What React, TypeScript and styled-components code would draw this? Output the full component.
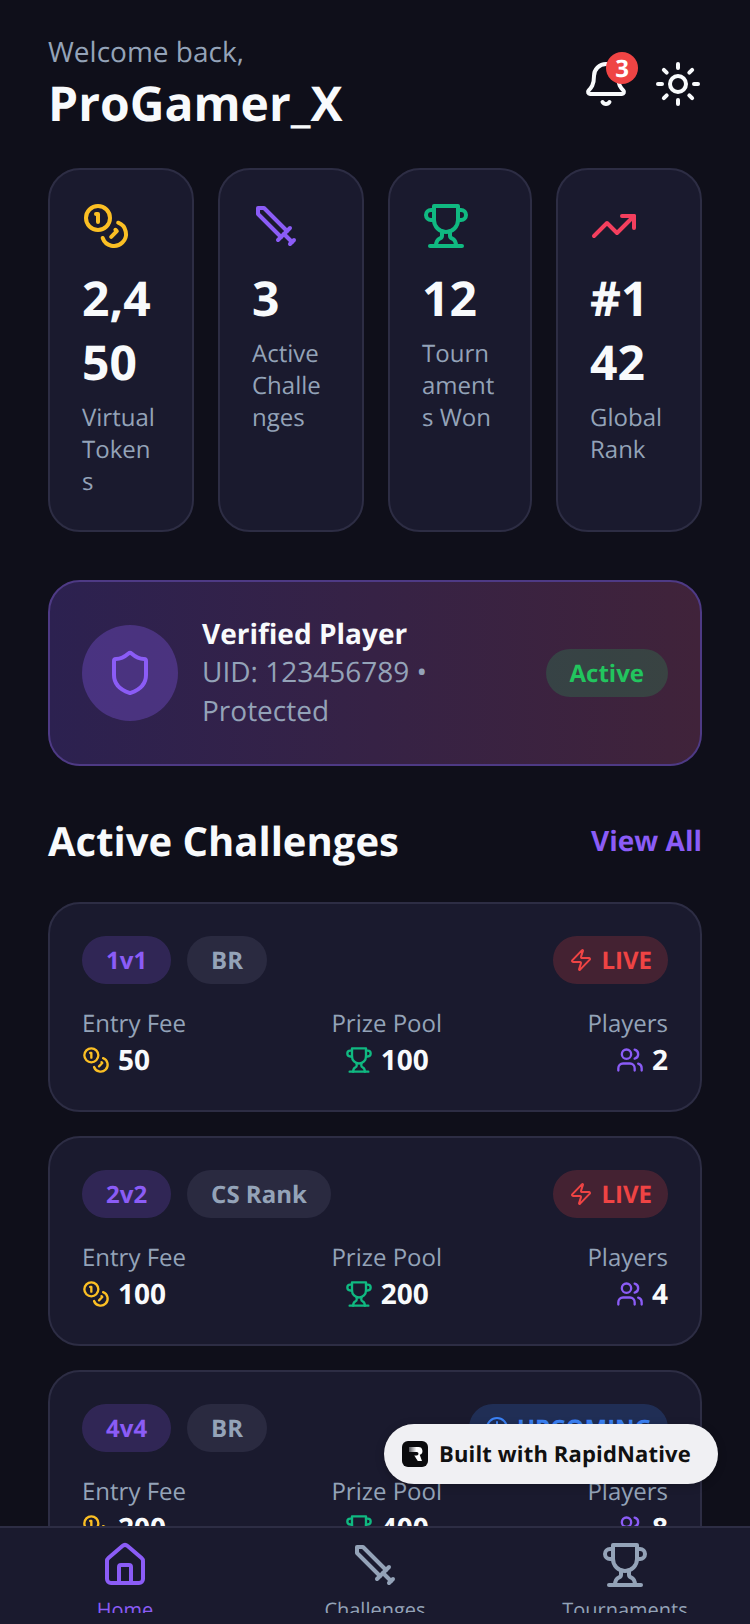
import React from 'react';
import styled, { createGlobalStyle } from 'styled-components';
import { Bell, Sun, Coins, TrendingUp, Shield, Zap, Clock, Users, Home } from 'lucide-react';

const FONT = '"Open Sans", "Noto Sans", sans-serif';

const GlobalStyle = createGlobalStyle`
  * { box-sizing: border-box; }
  html, body { margin: 0; padding: 0; background: #0f0f1a; }
  body { font-family: ${FONT}; text-rendering: geometricPrecision; }
  svg { flex-shrink: 0; }
`;

type IconProps = { size: number; color: string };

/** older lucide trophy, the one in the picture */
function Trophy({ size, color }: IconProps) {
  return (
    <svg width={size} height={size} viewBox="0 0 24 24" fill="none" stroke={color} strokeWidth="2" strokeLinecap="round" strokeLinejoin="round">
      <path d="M6 9H4.5a2.5 2.5 0 0 1 0-5H6" />
      <path d="M18 9h1.5a2.5 2.5 0 0 0 0-5H18" />
      <path d="M4 22h16" />
      <path d="M10 14.66V17c0 .55-.47.98-.97 1.21C7.85 18.75 7 20.24 7 22" />
      <path d="M14 14.66V17c0 .55.47.98.97 1.21C16.15 18.75 17 20.24 17 22" />
      <path d="M18 2H6v7a6 6 0 0 0 12 0V2Z" />
    </svg>
  );
}

/** older lucide sword, blade to the top left */
function Sword({ size, color }: IconProps) {
  return (
    <svg width={size} height={size} viewBox="0 0 24 24" fill="none" stroke={color} strokeWidth="2" strokeLinecap="round" strokeLinejoin="round">
      <polyline points="14.5 17.5 3 6 3 3 6 3 17.5 14.5" />
      <line x1="13" y1="19" x2="19" y2="13" />
      <line x1="16" y1="16" x2="20" y2="20" />
      <line x1="19" y1="21" x2="21" y2="19" />
    </svg>
  );
}

const STATS = [
  { icon: <Coins size={48} color="#fbbf24" />, value: '2,450', label: 'Virtual Tokens' },
  { icon: <Sword size={48} color="#8b5cf6" />, value: '3', label: 'Active Challenges' },
  { icon: <Trophy size={48} color="#10b981" />, value: '12', label: 'Tournaments Won' },
  { icon: <TrendingUp size={48} color="#f43f5e" />, value: '#142', label: 'Global Rank' },
];

const CHALLENGES = [
  { mode: '1v1', game: 'BR', status: 'live', fee: 50, prize: 100, players: 2 },
  { mode: '2v2', game: 'CS Rank', status: 'live', fee: 100, prize: 200, players: 4 },
  { mode: '4v4', game: 'BR', status: 'upcoming', fee: 200, prize: 400, players: 8 },
];

export default function App() {
  return (
    <Screen>
      <GlobalStyle />
      <Content>
        <Header>
          <div>
            <Welcome>Welcome back,</Welcome>
            <UserName>ProGamer_X</UserName>
          </div>
          <HeaderIcons>
            <BellWrap>
              <Bell size={48} color="#f8fafc" />
              <Badge>3</Badge>
            </BellWrap>
            <Sun size={48} color="#f8fafc" />
          </HeaderIcons>
        </Header>

        <StatRow>
          {STATS.map(s => (
            <StatCard key={s.label}>
              <StatIcon>{s.icon}</StatIcon>
              <StatValue>{s.value}</StatValue>
              <StatLabel>{s.label}</StatLabel>
            </StatCard>
          ))}
        </StatRow>

        <VerifiedCard>
          <ShieldCircle>
            <Shield size={48} color="#8b5cf6" />
          </ShieldCircle>
          <VerifiedText>
            <VerifiedName>Verified Player</VerifiedName>
            <VerifiedUid>UID: 123456789 • Protected</VerifiedUid>
          </VerifiedText>
          <ActivePill>Active</ActivePill>
        </VerifiedCard>

        <SectionHead>
          <SectionTitle>Active Challenges</SectionTitle>
          <ViewAll>View All</ViewAll>
        </SectionHead>

        <ChallengeList>
          {CHALLENGES.map(c => (
            <ChallengeCard key={c.mode}>
              <CardTop>
                <Tags>
                  <Tag $accent>{c.mode}</Tag>
                  <Tag>{c.game}</Tag>
                </Tags>
                {c.status === 'live' ? (
                  <Status $live>
                    <Zap size={24} />
                    LIVE
                  </Status>
                ) : (
                  <Status>
                    <Clock size={24} />
                    UPCOMING
                  </Status>
                )}
              </CardTop>
              <CardStats>
                <CardStat>
                  <StatCaption>Entry Fee</StatCaption>
                  <StatAmount>
                    <Coins size={28} color="#fbbf24" />
                    {c.fee}
                  </StatAmount>
                </CardStat>
                <CardStat $align="center">
                  <StatCaption>Prize Pool</StatCaption>
                  <StatAmount>
                    <Trophy size={28} color="#10b981" />
                    {c.prize}
                  </StatAmount>
                </CardStat>
                <CardStat $align="flex-end">
                  <StatCaption>Players</StatCaption>
                  <StatAmount>
                    <Users size={28} color="#8b5cf6" />
                    {c.players}
                  </StatAmount>
                </CardStat>
              </CardStats>
            </ChallengeCard>
          ))}
        </ChallengeList>
      </Content>

      <BuiltWith>
        <LogoMark viewBox="0 0 26 26">
          <defs>
            <linearGradient id="logoFade" x1="0" x2="1" y1="0" y2="0">
              <stop offset="0" stopColor="#55555a" />
              <stop offset="0.55" stopColor="#fff" />
            </linearGradient>
          </defs>
          <rect width="26" height="26" rx="6" fill="#0b0b0d" />
          <path d="M7 6h9.5a4 4 0 0 1 1.2 7.8L20 20h-4.2l-3.6-5.6h2.6a1.6 1.6 0 0 0 0-3.4H7z" fill="url(#logoFade)" />
        </LogoMark>
        Built with RapidNative
      </BuiltWith>

      <TabBar>
        <Tab $active>
          <Home size={48} color="#8b5cf6" />
          <TabLabel>Home</TabLabel>
        </Tab>
        <Tab>
          <Sword size={48} color="#94a3b8" />
          <TabLabel>Challenges</TabLabel>
        </Tab>
        <Tab>
          <Trophy size={48} color="#94a3b8" />
          <TabLabel>Tournaments</TabLabel>
        </Tab>
      </TabBar>
    </Screen>
  );
}

const Screen = styled.div`
  width: 750px;
  height: 1624px;
  position: relative;
  display: flex;
  flex-direction: column;
  overflow: hidden;
  background: #0f0f1a;
`;

const Content = styled.main`
  flex: 1;
  min-height: 0;
  overflow: hidden;
  padding: 33px 48px 0;
`;

const Header = styled.header`
  display: flex;
  justify-content: space-between;
  align-items: center;
  margin-bottom: 33px;
`;

const Welcome = styled.div`
  font-size: 28px;
  line-height: 38px;
  color: #94a3b8;
`;

const UserName = styled.h1`
  margin: 2px 0 0;
  font-size: 48px;
  line-height: 62px;
  font-weight: 700;
  color: #f8fafc;
`;

const HeaderIcons = styled.div`
  display: flex;
  align-items: center;
  gap: 24px;
`;

const BellWrap = styled.div`
  position: relative;
  display: flex;
`;

const Badge = styled.span`
  position: absolute;
  top: -8px;
  right: -8px;
  width: 32px;
  height: 32px;
  border-radius: 50%;
  background: #ef4444;
  color: #fff;
  font-size: 24px;
  font-weight: 700;
  display: flex;
  align-items: center;
  justify-content: center;
`;

const StatRow = styled.section`
  display: grid;
  grid-template-columns: 146px 146px 144px 146px;
  gap: 24px;
  margin-bottom: 48px;
`;

const StatCard = styled.div`
  min-width: 0;
  padding: 32px;
  background: #1a1a2e;
  border: 2px solid #2d2d44;
  border-radius: 32px;
`;

const StatIcon = styled.div`
  display: flex;
  margin-bottom: 17px;
`;

const StatValue = styled.div`
  font-size: 48px;
  line-height: 64px;
  font-weight: 700;
  color: #f8fafc;
  overflow-wrap: anywhere;
  margin-bottom: 7px;
`;

const StatLabel = styled.div`
  font-size: 24px;
  line-height: 32px;
  color: #94a3b8;
  overflow-wrap: anywhere;
`;

const VerifiedCard = styled.section`
  display: flex;
  align-items: center;
  padding: 33px 32px;
  margin-bottom: 48px;
  border: 2px solid #4e3a85;
  border-radius: 32px;
  background: linear-gradient(90deg, #2c2150, #40233a);
`;

const ShieldCircle = styled.div`
  width: 96px;
  height: 96px;
  flex-shrink: 0;
  border-radius: 50%;
  background: rgba(139, 92, 246, 0.3);
  display: flex;
  align-items: center;
  justify-content: center;
  margin-right: 24px;
`;

const VerifiedText = styled.div`
  flex: 1;
  min-width: 0;
`;

const VerifiedName = styled.div`
  font-size: 28px;
  line-height: 38px;
  font-weight: 700;
  color: #f8fafc;
`;

const VerifiedUid = styled.div`
  font-size: 28px;
  line-height: 39px;
  color: #94a3b8;
  padding-right: 60px;
`;

const ActivePill = styled.span`
  padding: 0 24px;
  height: 48px;
  border-radius: 24px;
  background: rgba(34, 197, 94, 0.2);
  color: #22c55e;
  font-size: 24px;
  font-weight: 700;
  display: flex;
  align-items: center;
`;

const SectionHead = styled.div`
  display: flex;
  justify-content: space-between;
  align-items: center;
  margin-bottom: 34px;
`;

const SectionTitle = styled.h2`
  margin: 0;
  font-size: 40px;
  line-height: 54px;
  font-weight: 700;
  color: #f8fafc;
`;

const ViewAll = styled.span`
  font-size: 28px;
  font-weight: 700;
  color: #8b5cf6;
`;

const ChallengeList = styled.div`
  display: flex;
  flex-direction: column;
  gap: 24px;
`;

const ChallengeCard = styled.article`
  padding: 32px;
  background: #1a1a2e;
  border: 2px solid #2d2d44;
  border-radius: 32px;
`;

const CardTop = styled.div`
  display: flex;
  justify-content: space-between;
  align-items: center;
  margin-bottom: 24px;
`;

const Tags = styled.div`
  display: flex;
  gap: 16px;
`;

const Tag = styled.span<{ $accent?: boolean }>`
  height: 48px;
  padding: 0 24px;
  border-radius: 24px;
  display: flex;
  align-items: center;
  font-size: 24px;
  font-weight: 700;
  color: ${p => (p.$accent ? '#8b5cf6' : '#94a3b8')};
  background: ${p => (p.$accent ? 'rgba(139, 92, 246, 0.2)' : '#2a2a40')};
`;

const Status = styled.span<{ $live?: boolean }>`
  height: 48px;
  padding: 0 16px;
  border-radius: 24px;
  display: flex;
  align-items: center;
  gap: 8px;
  font-size: 24px;
  font-weight: 700;
  color: ${p => (p.$live ? '#ef4444' : '#3b82f6')};
  background: ${p => (p.$live ? 'rgba(239, 68, 68, 0.2)' : 'rgba(59, 130, 246, 0.2)')};
`;

const CardStats = styled.div`
  display: flex;
  justify-content: space-between;
`;

const CardStat = styled.div<{ $align?: string }>`
  display: flex;
  flex-direction: column;
  align-items: ${p => p.$align || 'flex-start'};
`;

const StatCaption = styled.span`
  font-size: 24px;
  line-height: 32px;
  color: #94a3b8;
  margin-bottom: 2px;
`;

const StatAmount = styled.span`
  display: flex;
  align-items: center;
  gap: 8px;
  font-size: 28px;
  line-height: 36px;
  font-weight: 700;
  color: #f8fafc;
`;

const BuiltWith = styled.div`
  position: absolute;
  left: 384px;
  top: 1424px;
  width: 334px;
  height: 60px;
  border-radius: 30px;
  background: #f0f0f3;
  box-shadow: 0 2px 8px rgba(0, 0, 0, 0.25);
  display: flex;
  align-items: center;
  gap: 11px;
  padding-left: 18px;
  font-size: 22px;
  font-weight: 700;
  letter-spacing: 0.15px;
  color: #111;
  white-space: nowrap;
`;

const LogoMark = styled.svg`
  width: 26px;
  height: 26px;
`;

const TabBar = styled.nav`
  height: 98px;
  flex-shrink: 0;
  display: grid;
  grid-template-columns: repeat(3, 1fr);
  background: #1a1a2e;
  border-top: 2px solid #2d2d44;
  padding-top: 13px;
  position: relative;
`;

const Tab = styled.div<{ $active?: boolean }>`
  display: flex;
  flex-direction: column;
  align-items: center;
  height: 72px;
  overflow: hidden;
  color: ${p => (p.$active ? '#8b5cf6' : '#94a3b8')};
`;

const TabLabel = styled.span`
  font-size: 20px;
  line-height: 27px;
  margin-top: 7px;
`;
